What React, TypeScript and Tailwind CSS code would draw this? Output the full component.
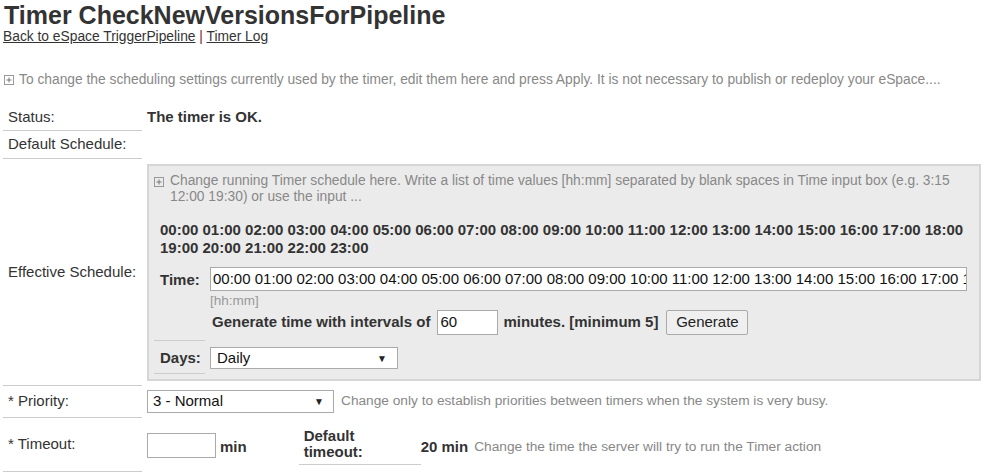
function PlusBox() {
  return (
    <svg width="10" height="10" viewBox="0 0 10 10" className="shrink-0">
      <rect x="0.5" y="0.5" width="9" height="9" fill="none" stroke="#999" />
      <path d="M2.5 5h5M5 2.5v5" stroke="#777" />
    </svg>
  );
}

function Caret() {
  return <span className="text-[10px] text-[#222]">▼</span>;
}

export default function App() {
  const times = Array.from({ length: 24 }, (_, i) => `${String(i).padStart(2, "0")}:00`).join(" ");
  return (
    <div className="w-[984px] h-[474px] bg-white text-[15px] text-[#333] font-['Liberation_Sans',Arial,sans-serif] overflow-hidden">
      <h1 className="pl-[4px] pt-[1px] text-[25px] leading-[28px] font-bold text-[#333]">
        Timer CheckNewVersionsForPipeline
      </h1>
      <div className="pl-[3px] leading-[16px] text-[13.8px]">
        <a className="underline text-[#333]">Back to eSpace TriggerPipeline</a>
        <span className="text-[#7a1f2b]"> | </span>
        <a className="underline text-[#333]">Timer Log</a>
      </div>
      <div className="mt-[27px] pl-[4px] flex items-center gap-[5px] text-[#888] text-[13.8px] leading-[16px]">
        <PlusBox />
        <span>
          To change the scheduling settings currently used by the timer, edit them here and press Apply. It is not necessary to publish or redeploy your eSpace....
        </span>
      </div>

      <div className="mt-[16px] flex flex-col">
        {/* Status */}
        <div className="flex">
          <div className="ml-[3px] w-[139px] h-[27px] border-b border-[#ccc] pl-[5px] flex items-center">Status:</div>
          <div className="ml-[5px] flex items-center h-[26px] font-bold">The timer is OK.</div>
        </div>
        {/* Default schedule */}
        <div className="flex">
          <div className="ml-[3px] w-[139px] h-[28px] border-b border-[#ccc] pl-[5px] flex items-center">Default Schedule:</div>
        </div>
        {/* Effective schedule */}
        <div className="flex">
          <div className="ml-[3px] w-[139px] h-[227px] border-b border-[#ccc] pl-[5px] flex items-center">
            Effective Schedule:
          </div>
          <div className="ml-[5px] mt-[5px] w-[834px] h-[217px] bg-[#ebebeb] border-2 border-[#d6d6d6] pl-[5px] pr-[6px] pt-[7px]">
            <div className="flex gap-[6px] text-[#888] text-[13.8px] leading-[16px]">
              <div className="pt-[4px]">
                <PlusBox />
              </div>
              <span>
                Change running Timer schedule here. Write a list of time values [hh:mm] separated by blank spaces in Time input box (e.g. 3:15 12:00 19:30) or use the input ...
              </span>
            </div>
            <div className="mt-[16px] pl-[6px] font-bold leading-[18px] pr-[6px]">{times}</div>
            <div className="mt-[10px] flex">
              <div className="w-[56px] pl-[6px] pt-[2px] font-bold">Time:</div>
              <div className="flex-1 flex flex-col">
                <div className="h-[24px] w-[757px] bg-white border border-[#aaa] pl-[2px] flex items-center overflow-hidden whitespace-nowrap text-[#111]">
                  {times}
                </div>
                <div className="text-[13.5px] leading-[19px] text-[#999]">[hh:mm]</div>
                <div className="flex items-center font-bold pl-[2px]">
                  <span>Generate time with intervals of</span>
                  <div className="ml-[7px] w-[61px] h-[25px] bg-white border border-[#aaa] pl-[2px] flex items-center font-normal text-[#111]">60</div>
                  <span className="ml-[5px]">minutes. [minimum 5]</span>
                  <button className="ml-[8px] w-[82px] h-[25px] bg-[#efefef] border border-[#aaa] rounded-[2px] font-normal text-[#222]">
                    Generate
                  </button>
                </div>
              </div>
            </div>
            <div className="mt-[5px] w-[51px] border-t border-[#ccc]" />
            <div className="flex items-center mt-[6px]">
              <div className="w-[56px] pl-[6px] font-bold">Days:</div>
              <div className="w-[188px] h-[22px] bg-white border border-[#aaa] pl-[6px] pr-[10px] flex items-center justify-between text-[#111]">
                <span>Daily</span>
                <Caret />
              </div>
            </div>
            <div className="mt-[3px] w-[51px] border-t border-[#ccc]" />
          </div>
        </div>
        {/* Priority */}
        <div className="flex">
          <div className="ml-[3px] w-[139px] h-[32px] border-b border-[#ccc] pl-[5px] flex items-center">* Priority:</div>
          <div className="ml-[5px] flex items-center h-[31px]">
            <div className="w-[187px] h-[23px] bg-white border border-[#aaa] pl-[5px] pr-[9px] flex items-center justify-between text-[#111]">
              <span>3 - Normal</span>
              <Caret />
            </div>
            <span className="ml-[7px] text-[#888] text-[13.7px]">Change only to establish priorities between timers when the system is very busy.</span>
          </div>
        </div>
        {/* Timeout */}
        <div className="flex">
          <div className="ml-[3px] w-[139px] h-[54px] border-b border-[#ccc] pl-[5px] flex items-center">* Timeout:</div>
          <div className="ml-[5px] flex items-start h-[54px]">
            <div className="mt-[15px] w-[69px] h-[25px] bg-white border border-[#aaa]" />
            <span className="mt-[18px] ml-[4px] font-bold">min</span>
            <div className="ml-[52px] w-[122px] mt-[10px] pl-[5px] pb-[4px] border-b border-[#ccc] font-bold leading-[16px]">
              Default
              <br />
              timeout:
            </div>
            <span className="mt-[18px] font-bold">20 min</span>
            <span className="mt-[19px] ml-[6px] text-[#888] text-[13.7px]">Change the time the server will try to run the Timer action</span>
          </div>
        </div>
      </div>
    </div>
  );
}
